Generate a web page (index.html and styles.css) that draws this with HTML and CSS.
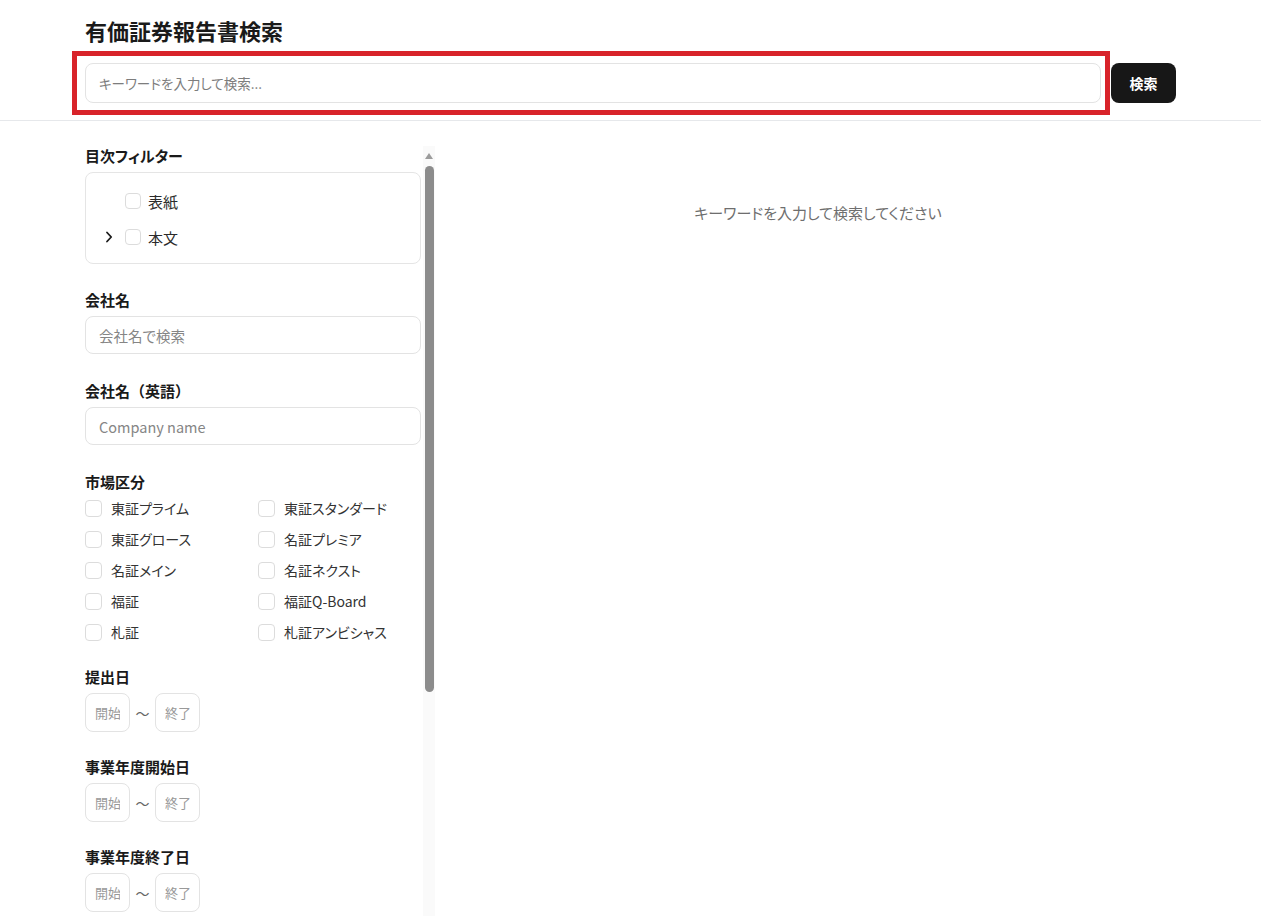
FILE: index.html
```html
<!DOCTYPE html>
<html lang="ja">
<head>
<meta charset="utf-8">
<title>有価証券報告書検索</title>
<link rel="stylesheet" href="styles.css">
</head>
<body>
<div class="page">
  <header class="top">
    <div class="container">
      <h1 class="title">有価証券報告書検索</h1>
      <div class="search-row">
        <div class="search-field">
          <input class="search-input" type="text" placeholder="キーワードを入力して検索...">
          <span class="annot"></span>
        </div>
        <button class="search-btn" type="button">検索</button>
      </div>
    </div>
  </header>

  <div class="container body">
    <aside class="sidebar">
      <div class="filters">
        <section class="sec sec-toc">
          <h2 class="label">目次フィルター</h2>
          <div class="toc">
            <div class="toc-row">
              <span class="toggle"></span>
              <input class="cb cb-sm" type="checkbox">
              <span class="toc-text">表紙</span>
            </div>
            <div class="toc-row">
              <span class="toggle"><svg width="8" height="12" viewBox="0 0 8 12"><path d="M2 1.5 L6.2 6 L2 10.5" fill="none" stroke="#1a1a1a" stroke-width="1.8" stroke-linecap="round" stroke-linejoin="round"/></svg></span>
              <input class="cb cb-sm" type="checkbox">
              <span class="toc-text">本文</span>
            </div>
          </div>
        </section>

        <section class="sec">
          <h2 class="label">会社名</h2>
          <input class="field" type="text" placeholder="会社名で検索">
        </section>

        <section class="sec">
          <h2 class="label">会社名<span class="paren">（英語）</span></h2>
          <input class="field" type="text" placeholder="Company name">
        </section>

        <section class="sec sec-market">
          <h2 class="label">市場区分</h2>
          <div class="market">
            <label class="opt"><input class="cb" type="checkbox"><span>東証プライム</span></label>
            <label class="opt"><input class="cb" type="checkbox"><span>東証スタンダード</span></label>
            <label class="opt"><input class="cb" type="checkbox"><span>東証グロース</span></label>
            <label class="opt"><input class="cb" type="checkbox"><span>名証プレミア</span></label>
            <label class="opt"><input class="cb" type="checkbox"><span>名証メイン</span></label>
            <label class="opt"><input class="cb" type="checkbox"><span>名証ネクスト</span></label>
            <label class="opt"><input class="cb" type="checkbox"><span>福証</span></label>
            <label class="opt"><input class="cb" type="checkbox"><span>福証Q-Board</span></label>
            <label class="opt"><input class="cb" type="checkbox"><span>札証</span></label>
            <label class="opt"><input class="cb" type="checkbox"><span>札証アンビシャス</span></label>
          </div>
        </section>

        <section class="sec sec-date">
          <h2 class="label">提出日</h2>
          <div class="range">
            <input class="date" type="text" placeholder="開始">
            <span class="tilde">〜</span>
            <input class="date" type="text" placeholder="終了">
          </div>
        </section>

        <section class="sec sec-date">
          <h2 class="label">事業年度開始日</h2>
          <div class="range">
            <input class="date" type="text" placeholder="開始">
            <span class="tilde">〜</span>
            <input class="date" type="text" placeholder="終了">
          </div>
        </section>

        <section class="sec sec-date">
          <h2 class="label">事業年度終了日</h2>
          <div class="range">
            <input class="date" type="text" placeholder="開始">
            <span class="tilde">〜</span>
            <input class="date" type="text" placeholder="終了">
          </div>
        </section>
      </div>
      <div class="scrollbar">
        <span class="arrow"></span>
        <span class="thumb"></span>
      </div>
    </aside>

    <main class="results">
      <p class="empty">キーワードを入力して検索してください</p>
    </main>
  </div>
</div>
</body>
</html>
```

FILE: styles.css
```css
* { box-sizing: border-box; }

html, body {
  margin: 0;
  padding: 0;
  height: 100%;
  overflow: hidden;
  background: #ffffff;
}

body {
  font-family: "Noto Sans CJK JP", "Noto Sans", sans-serif;
  font-feature-settings: "palt";
  color: #1a1a1a;
}

input, button {
  font-family: "Noto Sans CJK JP", "Noto Sans", sans-serif;
  font-feature-settings: "palt";
}

.page {
  height: 100vh;
  display: flex;
  flex-direction: column;
}

.container {
  width: 1091px;
  margin: 0 auto;
}

/* header */
.top {
  border-bottom: 1px solid #e6e8eb;
  padding: 14px 0 17px;
}

.title {
  margin: 0 0 17px;
  font-size: 22px;
  line-height: 32px;
  font-weight: 700;
  color: #1a1a1a;
}

.search-row {
  display: flex;
  align-items: center;
  gap: 10px;
}

.search-field {
  position: relative;
  flex: 1;
  display: flex;
}

.search-input {
  flex: 1;
  height: 40px;
  padding: 0 13px;
  border: 1px solid #e3e3e3;
  border-radius: 8px;
  font-size: 13.5px;
  color: #222;
  outline: none;
  background: #fff;
}

.search-input::placeholder { color: #7d7d7d; }

.annot {
  position: absolute;
  top: -12px;
  left: -13px;
  right: -9px;
  bottom: -12px;
  border: 5px solid #d8232a;
  pointer-events: none;
}

.search-btn {
  width: 65px;
  height: 40px;
  border: none;
  border-radius: 8px;
  background: #171717;
  color: #ffffff;
  font-size: 14px;
  font-weight: 700;
}

/* body */
.body {
  flex: 1;
  display: flex;
  gap: 25px;
  padding-top: 25px;
  min-height: 0;
}

.sidebar {
  width: 350px;
  display: flex;
  gap: 2px;
  flex-shrink: 0;
}

.filters {
  width: 336px;
  display: flex;
  flex-direction: column;
}

.sec { margin-bottom: 27px; }
.sec-toc { margin-bottom: 26px; }
.sec-market { margin-bottom: 23px; }
.sec-date { margin-bottom: 25px; }

.label {
  margin: 0 0 6px;
  font-size: 15px;
  line-height: 20px;
  font-weight: 700;
  color: #1a1a1a;
}

.paren {
  font-feature-settings: normal;
}

/* toc */
.toc {
  border: 1px solid #e5e5e5;
  border-radius: 8px;
  padding: 14px 14px 12px;
  display: flex;
  flex-direction: column;
  gap: 8px;
}

.toc-row {
  height: 28px;
  display: flex;
  align-items: center;
}

.toggle {
  width: 18px;
  height: 28px;
  display: flex;
  align-items: center;
  justify-content: center;
  margin-right: 7px;
}

.toc-text {
  margin-left: 7px;
  font-size: 15px;
  color: #2b2b2b;
}

/* checkbox */
.cb {
  appearance: none;
  -webkit-appearance: none;
  margin: 0;
  width: 17px;
  height: 17px;
  border: 1px solid #dcdcdc;
  border-radius: 4px;
  background: #fff;
  flex-shrink: 0;
}

.cb-sm {
  width: 16px;
  height: 16px;
}

/* inputs */
.field {
  display: block;
  width: 100%;
  height: 38px;
  padding: 0 13px;
  border: 1px solid #e3e3e3;
  border-radius: 8px;
  font-size: 14.5px;
  color: #222;
  outline: none;
  background: #fff;
}

.field::placeholder { color: #858585; }

/* market */
.market {
  margin-top: -2px;
  display: grid;
  grid-template-columns: 163px 163px;
  column-gap: 10px;
  row-gap: 7px;
}

.opt {
  height: 24px;
  display: flex;
  align-items: center;
  gap: 9px;
  font-size: 14px;
  color: #333;
}

/* date ranges */
.range {
  display: flex;
  align-items: center;
  gap: 5px;
}

.date {
  width: 45px;
  height: 39px;
  padding: 0 9px;
  border: 1px solid #e3e3e3;
  border-radius: 8px;
  font-size: 13px;
  color: #222;
  outline: none;
  background: #fff;
}

.date::placeholder { color: #999; }

.tilde {
  font-size: 14px;
  color: #666;
  width: 15px;
  text-align: center;
}

/* fake scrollbar */
.scrollbar {
  width: 12px;
  background: #fafafa;
  display: flex;
  flex-direction: column;
  align-items: center;
}

.arrow {
  margin-top: 7px;
  width: 0;
  height: 0;
  border-left: 4px solid transparent;
  border-right: 4px solid transparent;
  border-bottom: 6px solid #9c9c9c;
}

.thumb {
  margin-top: 7px;
  width: 9px;
  height: 526px;
  border-radius: 5px;
  background: #8c8c8c;
}

/* results */
.results {
  flex: 1;
  padding-top: 55px;
}

.empty {
  margin: 0;
  text-align: center;
  font-size: 15px;
  line-height: 24px;
  color: #6e6e6e;
}
```
